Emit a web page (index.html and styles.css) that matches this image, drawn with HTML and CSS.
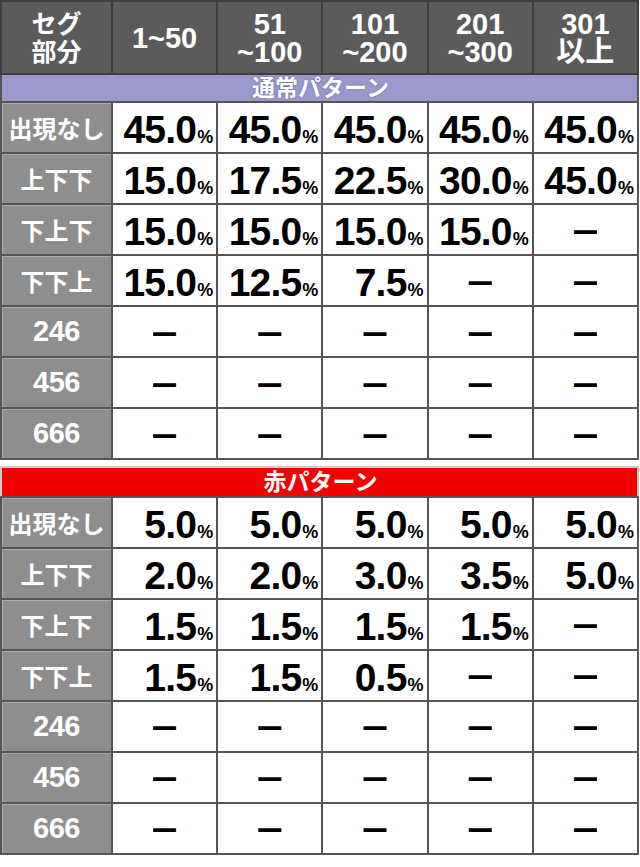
FILE: index.html
```html
<!DOCTYPE html>
<html lang="ja">
<head>
<meta charset="utf-8">
<title>セグ部分</title>
<link rel="stylesheet" href="styles.css">
</head>
<body>
<table class="tbl tbl-normal">
  <colgroup><col class="c-label"><col><col><col><col><col></colgroup>
  <thead>
    <tr class="head">
      <th>セグ<br>部分</th>
      <th>1~50</th>
      <th>51<br>~100</th>
      <th>101<br>~200</th>
      <th>201<br>~300</th>
      <th>301<br>以上</th>
    </tr>
  </thead>
  <tbody>
    <tr class="band band-purple"><td colspan="6">通常パターン</td></tr>
    <tr><th class="lbl">出現なし</th><td class="v">45.0<small>%</small></td><td class="v">45.0<small>%</small></td><td class="v">45.0<small>%</small></td><td class="v">45.0<small>%</small></td><td class="v">45.0<small>%</small></td></tr>
    <tr><th class="lbl">上下下</th><td class="v">15.0<small>%</small></td><td class="v">17.5<small>%</small></td><td class="v">22.5<small>%</small></td><td class="v">30.0<small>%</small></td><td class="v">45.0<small>%</small></td></tr>
    <tr><th class="lbl">下上下</th><td class="v">15.0<small>%</small></td><td class="v">15.0<small>%</small></td><td class="v">15.0<small>%</small></td><td class="v">15.0<small>%</small></td><td class="d"><span>—</span></td></tr>
    <tr><th class="lbl">下下上</th><td class="v">15.0<small>%</small></td><td class="v">12.5<small>%</small></td><td class="v">7.5<small>%</small></td><td class="d"><span>—</span></td><td class="d"><span>—</span></td></tr>
    <tr><th class="lbl num">246</th><td class="d"><span>—</span></td><td class="d"><span>—</span></td><td class="d"><span>—</span></td><td class="d"><span>—</span></td><td class="d"><span>—</span></td></tr>
    <tr><th class="lbl num">456</th><td class="d"><span>—</span></td><td class="d"><span>—</span></td><td class="d"><span>—</span></td><td class="d"><span>—</span></td><td class="d"><span>—</span></td></tr>
    <tr><th class="lbl num">666</th><td class="d"><span>—</span></td><td class="d"><span>—</span></td><td class="d"><span>—</span></td><td class="d"><span>—</span></td><td class="d"><span>—</span></td></tr>
  </tbody>
</table>

<table class="tbl tbl-red">
  <colgroup><col class="c-label"><col><col><col><col><col></colgroup>
  <tbody>
    <tr class="band band-red"><td colspan="6">赤パターン</td></tr>
    <tr><th class="lbl">出現なし</th><td class="v">5.0<small>%</small></td><td class="v">5.0<small>%</small></td><td class="v">5.0<small>%</small></td><td class="v">5.0<small>%</small></td><td class="v">5.0<small>%</small></td></tr>
    <tr><th class="lbl">上下下</th><td class="v">2.0<small>%</small></td><td class="v">2.0<small>%</small></td><td class="v">3.0<small>%</small></td><td class="v">3.5<small>%</small></td><td class="v">5.0<small>%</small></td></tr>
    <tr><th class="lbl">下上下</th><td class="v">1.5<small>%</small></td><td class="v">1.5<small>%</small></td><td class="v">1.5<small>%</small></td><td class="v">1.5<small>%</small></td><td class="d"><span>—</span></td></tr>
    <tr><th class="lbl">下下上</th><td class="v">1.5<small>%</small></td><td class="v">1.5<small>%</small></td><td class="v">0.5<small>%</small></td><td class="d"><span>—</span></td><td class="d"><span>—</span></td></tr>
    <tr><th class="lbl num">246</th><td class="d"><span>—</span></td><td class="d"><span>—</span></td><td class="d"><span>—</span></td><td class="d"><span>—</span></td><td class="d"><span>—</span></td></tr>
    <tr><th class="lbl num">456</th><td class="d"><span>—</span></td><td class="d"><span>—</span></td><td class="d"><span>—</span></td><td class="d"><span>—</span></td><td class="d"><span>—</span></td></tr>
    <tr><th class="lbl num">666</th><td class="d"><span>—</span></td><td class="d"><span>—</span></td><td class="d"><span>—</span></td><td class="d"><span>—</span></td><td class="d"><span>—</span></td></tr>
  </tbody>
</table>
</body>
</html>
```

FILE: styles.css
```css
html, body {
  margin: 0;
  padding: 0;
  background: #ffffff;
}

body {
  font-family: "Liberation Sans", "Noto Sans CJK JP", sans-serif;
  font-weight: bold;
  color: #000;
}

.tbl {
  width: 639px;
  border-collapse: collapse;
  table-layout: fixed;
}

.tbl-red {
  margin-top: 6px;
}

.c-label {
  width: 111px;
}

.tbl th,
.tbl td {
  border: 2px solid #555555;
  padding: 0;
}

.head th {
  height: 70px;
  background: #5b5b5b;
  color: #ffffff;
  font-size: 29px;
  line-height: 28px;
  font-weight: bold;
  text-align: center;
  border-color: #3e3e3e;
  padding-top: 1px;
}

.head th:first-child {
  font-size: 25px;
  line-height: 28px;
  padding-top: 0;
}

.band td {
  color: #ffffff;
  font-size: 23px;
  text-align: center;
  padding-left: 2px;
}

.band-purple td {
  height: 26px;
  line-height: 26px;
  background: #9a98cc;
  text-shadow: 0 0 2px rgba(60, 60, 100, 0.6);
}

.band-red td {
  height: 28px;
  line-height: 28px;
  background: #f50000;
  border-color: #cccccc;
  border-bottom-color: #555555;
}

.lbl {
  height: 49px;
  background: #8e8e8e;
  color: #ffffff;
  font-size: 24px;
  font-weight: bold;
  text-align: center;
  box-shadow: inset 1px 1px 0 rgba(255, 255, 255, 0.25);
}

.lbl.num {
  font-size: 29px;
  letter-spacing: -0.5px;
}

.v {
  text-align: right;
  vertical-align: bottom;
  padding-right: 3px !important;
  padding-bottom: 0 !important;
  font-size: 39px;
  line-height: 30px;
  letter-spacing: -0.8px;
  white-space: nowrap;
}

.v small {
  font-size: 18px;
  letter-spacing: 0;
  margin-left: 1px;
}

.d {
  text-align: center;
  font-size: 23px;
  line-height: 23px;
}

.d span {
  display: inline-block;
  transform: scaleY(1.6);
}
```
